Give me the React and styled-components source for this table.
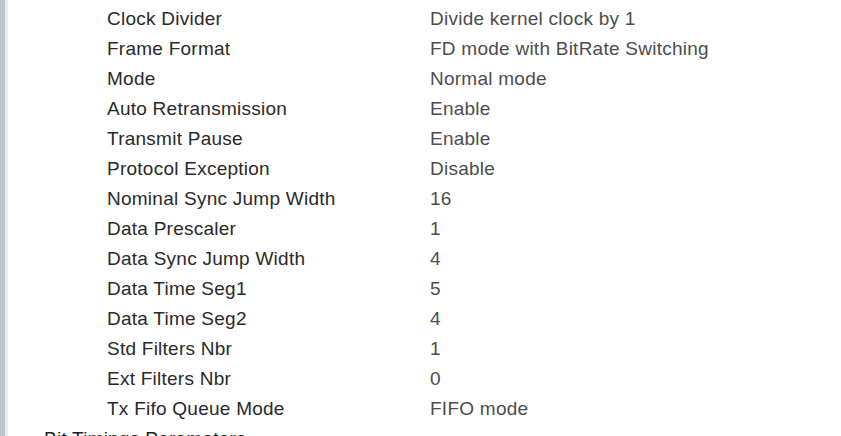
import React from "react";
import styled, { createGlobalStyle } from "styled-components";

const Global = createGlobalStyle`
  html, body { margin: 0; padding: 0; background: #fff; overflow: hidden; }
  body { font-family: "Liberation Sans", Arial, sans-serif; }
`;

const Page = styled.div`
  display: flex;
  width: 841px;
  height: 436px;
  overflow: hidden;
  background: #fff;
`;

const Gutter = styled.div`
  flex: none;
  width: 5px;
  background: #b9c4cb;
  border-right: 3px solid #e9edf0;
`;

const Tree = styled.div`
  flex: 1;
  padding-top: 4px;
  font-size: 19px;
  line-height: 30px;
  letter-spacing: 0.25px;
`;

const Row = styled.div`
  display: grid;
  grid-template-columns: 323px 1fr;
  padding-left: 99px;
  height: 30px;
  white-space: nowrap;
`;

const Label = styled.span`
  color: #2a2a2a;
`;

const Value = styled.span`
  color: #4d4d4d;
`;

const GroupNode = styled.div`
  display: flex;
  align-items: center;
  height: 30px;
  padding-left: 9px;
  white-space: nowrap;
  color: #1e1e1e;
`;

const Connector = styled.span`
  width: 22px;
  margin-right: 5px;
  border-top: 1px dotted #a8a8a8;
  margin-top: 10px;
`;

const params = [
  ["Clock Divider", "Divide kernel clock by 1"],
  ["Frame Format", "FD mode with BitRate Switching"],
  ["Mode", "Normal mode"],
  ["Auto Retransmission", "Enable"],
  ["Transmit Pause", "Enable"],
  ["Protocol Exception", "Disable"],
  ["Nominal Sync Jump Width", "16"],
  ["Data Prescaler", "1"],
  ["Data Sync Jump Width", "4"],
  ["Data Time Seg1", "5"],
  ["Data Time Seg2", "4"],
  ["Std Filters Nbr", "1"],
  ["Ext Filters Nbr", "0"],
  ["Tx Fifo Queue Mode", "FIFO mode"],
];

export default function App() {
  return (
    <>
      <Global />
      <Page>
        <Gutter />
        <Tree>
          {params.map(([k, v]) => (
            <Row key={k}>
              <Label>{k}</Label>
              <Value>{v}</Value>
            </Row>
          ))}
          <GroupNode>
            <Connector />
            Bit Timings Parameters
          </GroupNode>
        </Tree>
      </Page>
    </>
  );
}
